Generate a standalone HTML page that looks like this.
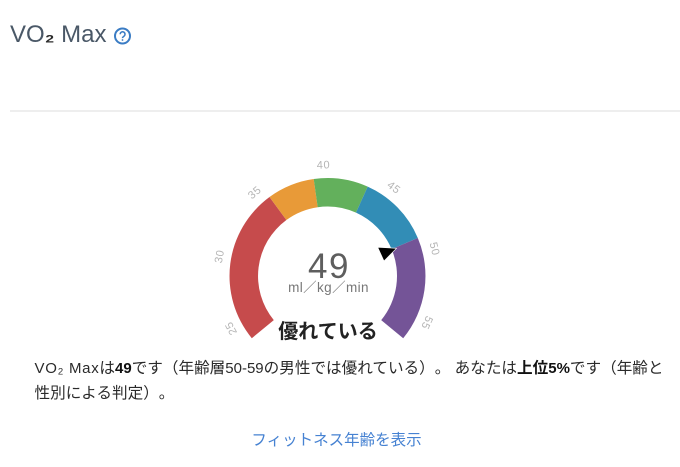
<!DOCTYPE html>
<html lang="ja">
<head>
<meta charset="utf-8">
<title>VO₂ Max</title>
<style>
html,body{margin:0;padding:0;background:#fff;width:680px;height:467px;overflow:hidden}
body{position:relative;font-family:"Liberation Sans","Noto Sans CJK JP",sans-serif;color:#222}
.title{position:absolute;left:10px;top:20px;font-size:24px;line-height:30px;color:#4a5867;white-space:nowrap}
.title span{font-weight:700;color:#2b2b2b;font-size:22px}
.rule{position:absolute;left:10px;top:110px;width:670px;height:2px;background:#eee}
.desc{position:absolute;left:34.5px;top:356px;width:645px;font-size:15.6px;line-height:25px;color:#2a2a2a;text-spacing-trim:space-all;white-space:nowrap}
.desc i{font-style:normal;font-size:15px}
.desc i.v{letter-spacing:.7px}
.desc b{color:#111}
.link{position:absolute;left:0;top:430px;width:673px;text-align:center;font-size:15.5px;line-height:22px;color:#4682d2}
svg{position:absolute;left:0;top:0}
</style>
</head>
<body>
<div class="title">VO<span>₂</span> Max</div>
<svg width="680" height="467" viewBox="0 0 680 467">
  <circle cx="122.5" cy="36" r="7.5" fill="none" stroke="#3a7cc4" stroke-width="2"/>
  <path d="M120.2 34.2a2.4 2.4 0 1 1 3.7 2c-.9.6-1.4 1-1.4 1.9" fill="none" stroke="#3a7cc4" stroke-width="1.5"/>
  <circle cx="122.5" cy="40" r=".9" fill="#3a7cc4"/>

  <path d="M251.8 338.2A98 98 0 0 1 269.5 197L286.4 220A69.5 69.5 0 0 0 273.8 320.1Z" fill="#c64b4c"/>
  <path d="M269.5 197A98 98 0 0 1 313.7 179L317.7 207.2A69.5 69.5 0 0 0 286.4 220Z" fill="#e89a38"/>
  <path d="M313.7 179A98 98 0 0 1 367.7 186.6L356 212.6A69.5 69.5 0 0 0 317.7 207.2Z" fill="#63b05c"/>
  <path d="M367.7 186.6A98 98 0 0 1 417.8 238L391.6 249.1A69.5 69.5 0 0 0 356 212.6Z" fill="#328db6"/>
  <path d="M417.8 238A98 98 0 0 1 403.2 338.2L381.2 320.1A69.5 69.5 0 0 0 391.6 249.1Z" fill="#745497"/>
  <path d="M377.7 247.3L396.5 248.3L384 261Z" fill="#000" stroke="#fff" stroke-width=".6"/>

  <g font-family="'Liberation Sans',sans-serif" font-size="11" letter-spacing=".6" fill="#b5b5b5" text-anchor="middle" dominant-baseline="central">
    <text transform="translate(231.5 328) rotate(-118)">25</text>
    <text transform="translate(220 256.5) rotate(-80)">30</text>
    <text transform="translate(255 193) rotate(-41)">35</text>
    <text transform="translate(323.5 165.5) rotate(-2)">40</text>
    <text transform="translate(393.5 188) rotate(37)">45</text>
    <text transform="translate(434 249) rotate(76)">50</text>
    <text transform="translate(426.5 322.5) rotate(115)">55</text>
  </g>

  <text x="329" y="278" text-anchor="middle" letter-spacing="1.5" font-family="'Liberation Sans',sans-serif" font-size="35" fill="#5e5e5e">49</text>
  <text x="328.5" y="292" text-anchor="middle" letter-spacing=".4" font-family="'Liberation Sans','Noto Sans CJK JP',sans-serif" font-size="13.5" fill="#777">ml／kg／min</text>
  <text x="328" y="338" text-anchor="middle" font-family="'Liberation Sans','Noto Sans CJK JP',sans-serif" font-size="20" font-weight="700" fill="#222">優れている</text>
</svg>
<div class="rule"></div>
<div class="desc"><i class="v">VO₂ Max</i>は<b><i>49</i></b>です（年齢層<i>50-59</i>の男性では優れている）。 あなたは<b>上位<i>5%</i></b>です（年齢と<br>性別による判定）。</div>
<div class="link">フィットネス年齢を表示</div>
</body>
</html>
